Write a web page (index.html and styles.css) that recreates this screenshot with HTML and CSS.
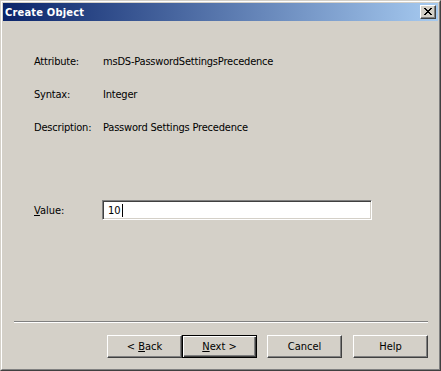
FILE: index.html
```html
<!DOCTYPE html>
<html lang="en">
<head>
  <meta charset="UTF-8" />
  <title>Create Object</title>
  <link rel="stylesheet" href="styles.css">
</head>
<body>

  <div class="window">
    <div class="window-inner">

      <!-- Title bar -->
      <div class="titlebar">
        <span class="title">Create Object</span>
        <button class="close-btn" aria-label="Close">
          <svg width="8" height="7" viewBox="0 0 8 7" shape-rendering="crispEdges">
            <path d="M0 0h2v1H0zM6 0h2v1H6zM1 1h2v1H1zM5 1h2v1H5zM2 2h4v1H2zM3 3h2v1H3zM2 4h4v1H2zM1 5h2v1H1zM5 5h2v1H5zM0 6h2v1H0zM6 6h2v1H6z" fill="#000"/>
          </svg>
        </button>
      </div>

      <div class="content">
        <!-- Attribute info -->
        <div class="fields">
          <div class="label">Attribute:</div>
          <div class="value">msDS-PasswordSettingsPrecedence</div>
          <div class="label">Syntax:</div>
          <div class="value">Integer</div>
          <div class="label">Description:</div>
          <div class="value">Password Settings Precedence</div>
        </div>

        <!-- Value entry -->
        <div class="value-row">
          <label class="label"><u>V</u>alue:</label>
          <div class="edit">10<span class="caret"></span></div>
        </div>

        <!-- Buttons -->
        <div class="footer">
          <div class="separator"></div>
          <div class="buttons">
            <button class="btn">&lt; <u>B</u>ack</button>
            <button class="btn default"><u>N</u>ext &gt;</button>
            <button class="btn cancel">Cancel</button>
            <button class="btn help">Help</button>
          </div>
        </div>
      </div>

    </div>
  </div>

</body>
</html>
```

FILE: styles.css
```css
body {
  margin: 0;
  padding: 0;
  font-family: Tahoma, "DejaVu Sans Condensed", "Liberation Sans", sans-serif;
  font-size: 11px;
  background-color: #d4d0c8;
}

.window {
  width: 441px;
  height: 371px;
  box-sizing: border-box;
  border: 1px solid;
  border-color: #d4d0c8 #404040 #404040 #d4d0c8;
  background-color: #d4d0c8;
}

.window-inner {
  height: 100%;
  box-sizing: border-box;
  border: 1px solid;
  border-color: #fff #808080 #808080 #fff;
  padding: 1px;
  display: flex;
  flex-direction: column;
}

.titlebar {
  height: 18px;
  display: flex;
  align-items: center;
  justify-content: space-between;
  background: linear-gradient(to right, #0a246a, #a6caf0);
  color: #fff;
}

.title {
  font-weight: bold;
  padding-left: 2px;
  letter-spacing: 0.2px;
}

.close-btn {
  width: 16px;
  height: 14px;
  margin-right: 2px;
  padding: 0;
  box-sizing: border-box;
  background-color: #d4d0c8;
  border: 1px solid;
  border-color: #fff #404040 #404040 #fff;
  box-shadow: inset -1px -1px #808080;
  display: flex;
  align-items: center;
  justify-content: center;
}

.close-btn svg {
  display: block;
  margin-left: -1px;
  margin-top: -1px;
}

.content {
  flex: 1;
  display: flex;
  flex-direction: column;
  color: #000;
}

.fields {
  display: grid;
  grid-template-columns: 69px auto;
  row-gap: 20px;
  padding: 34px 0 0 31px;
  line-height: 13px;
  letter-spacing: -0.2px;
}

.value-row {
  display: flex;
  align-items: center;
  margin-top: 66px;
  padding-left: 31px;
  line-height: 13px;
}

.value-row .label {
  width: 68px;
}

.edit {
  width: 270px;
  height: 20px;
  box-sizing: border-box;
  background-color: #fff;
  border: 1px solid;
  border-color: #808080 #fff #fff #808080;
  box-shadow: inset 1px 1px #404040, inset -1px -1px #d4d0c8;
  padding: 1px 0 0 5px;
  display: flex;
  align-items: center;
}

.caret {
  display: inline-block;
  width: 1px;
  height: 13px;
  background-color: #000;
  margin-left: 1px;
}

.footer {
  margin-top: auto;
  padding-bottom: 10px;
}

.separator {
  height: 0;
  margin: 0 10px 12px 11px;
  border-top: 1px solid #808080;
  border-bottom: 1px solid #fff;
}

.buttons {
  display: flex;
  justify-content: flex-end;
  padding-right: 10px;
}

.btn {
  width: 75px;
  height: 23px;
  box-sizing: border-box;
  padding: 0;
  font-family: inherit;
  font-size: 11px;
  color: #000;
  background-color: #d4d0c8;
  border: 1px solid;
  border-color: #fff #404040 #404040 #fff;
  box-shadow: inset -1px -1px #808080;
}

.btn.default {
  border: 1px solid #000;
  box-shadow: inset 1px 1px #fff, inset -1px -1px #404040, inset -2px -2px #808080;
}

.btn.cancel {
  margin-left: 10px;
}

.btn.help {
  margin-left: 11px;
}
```
